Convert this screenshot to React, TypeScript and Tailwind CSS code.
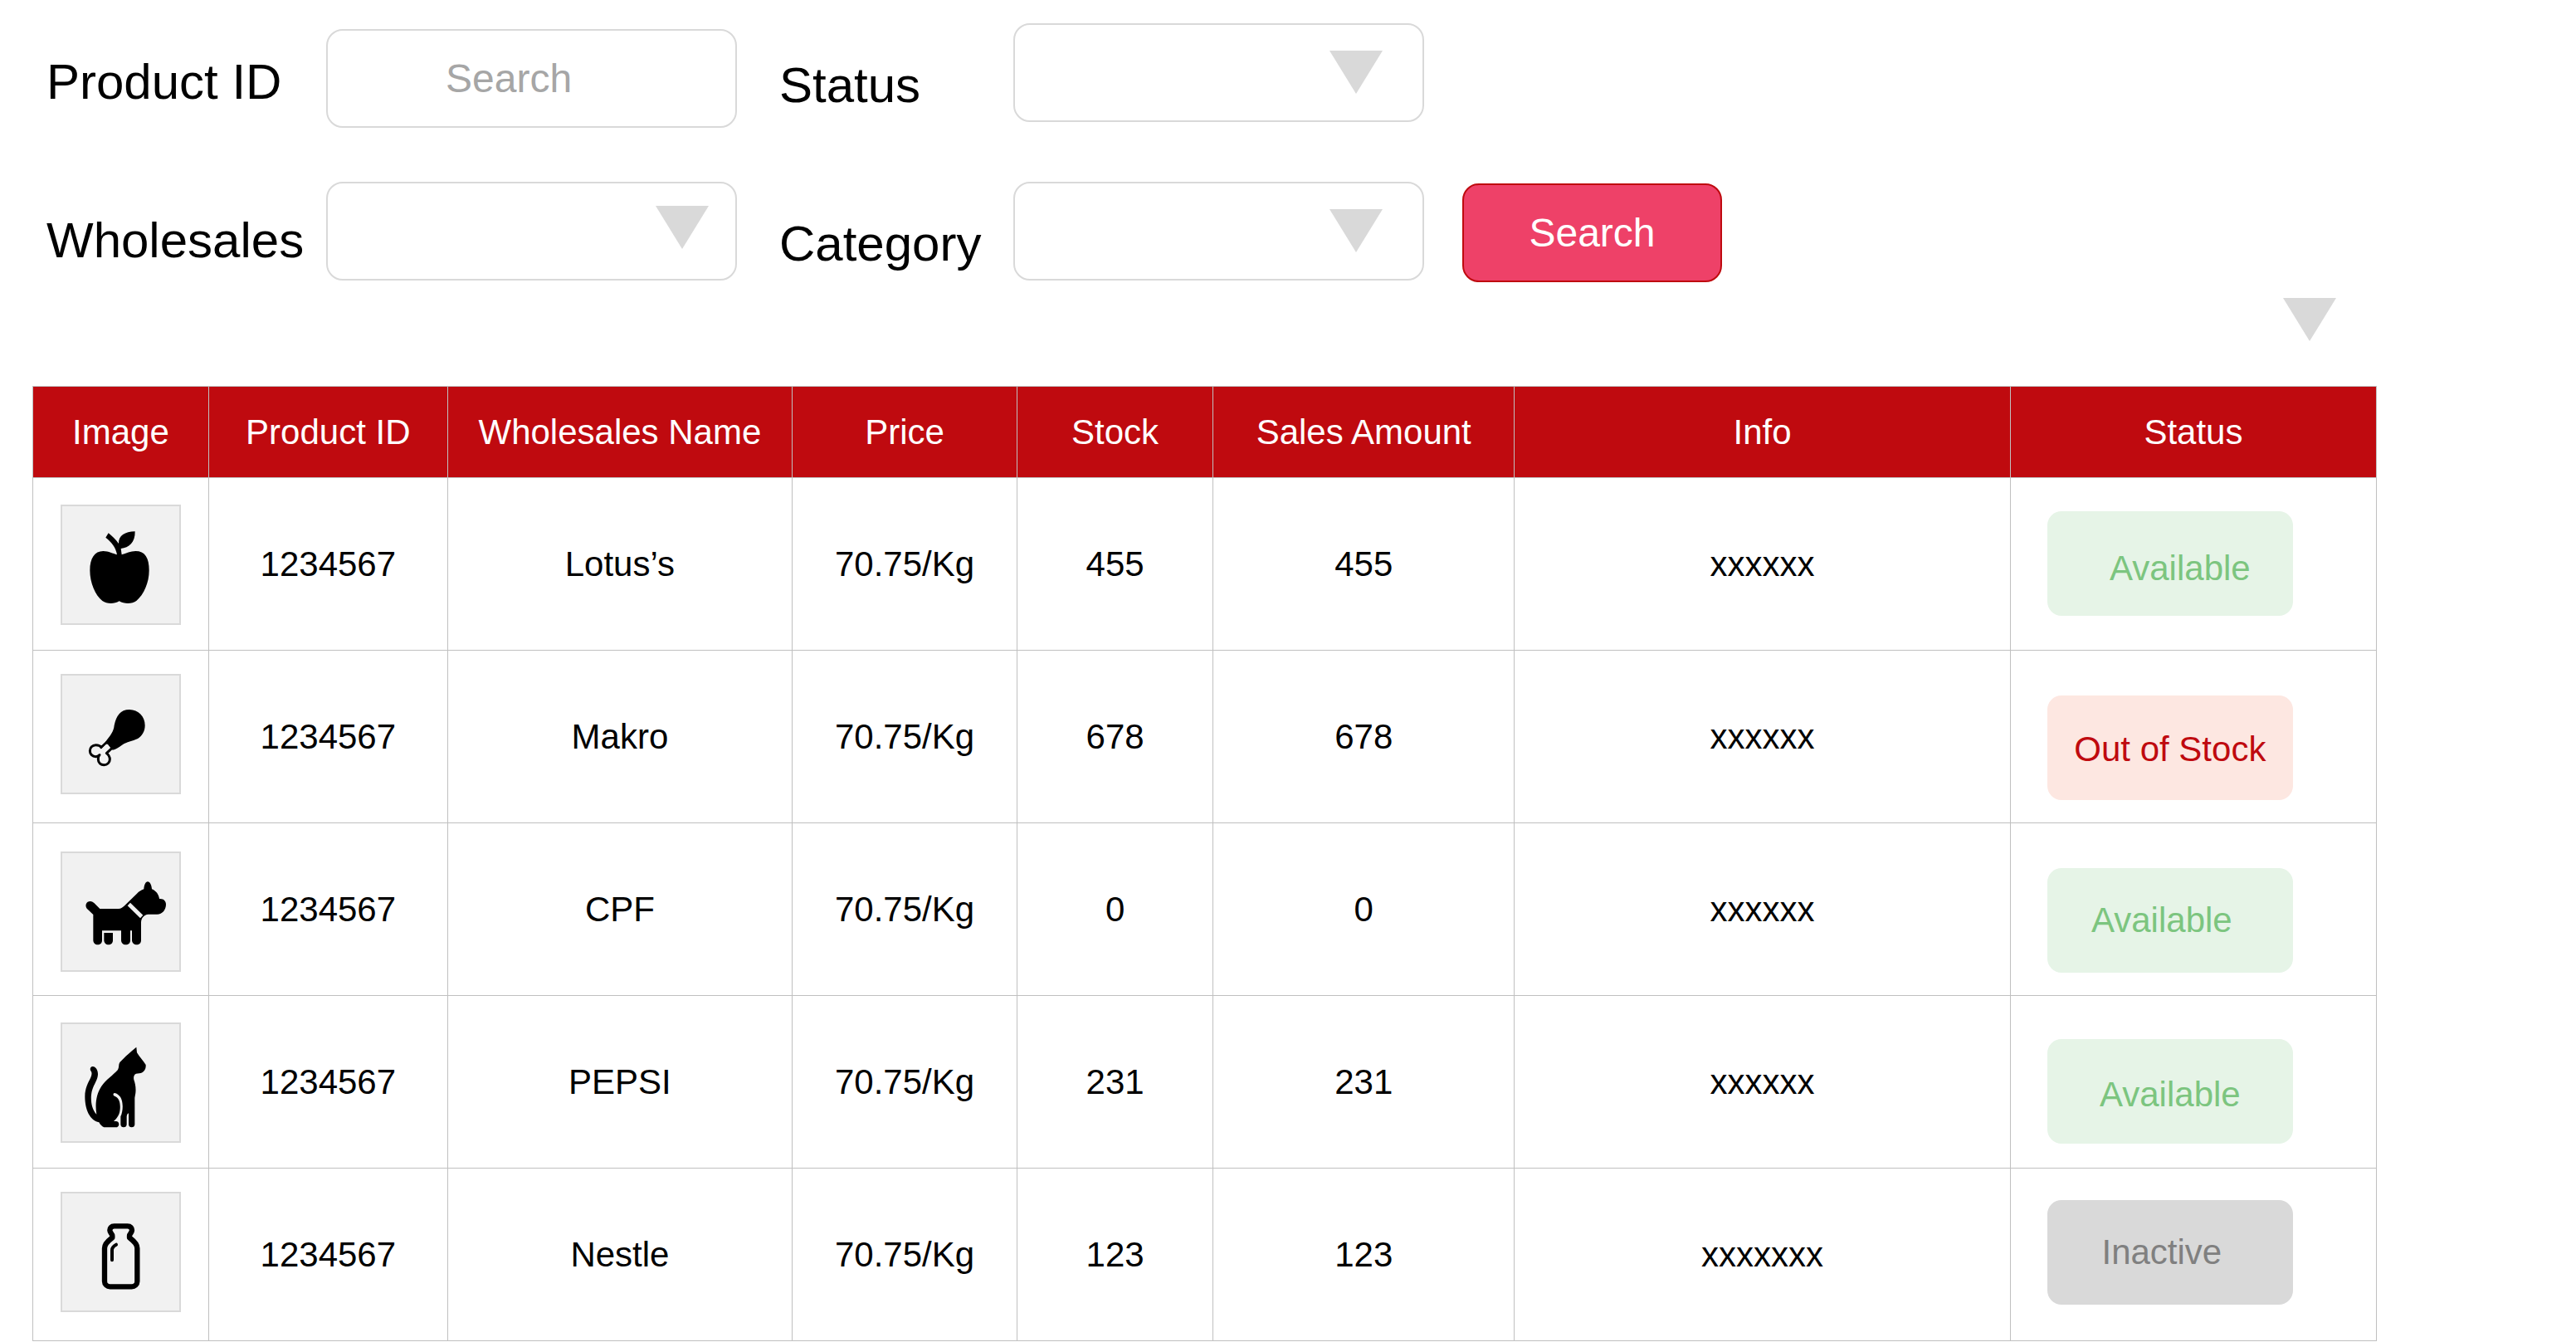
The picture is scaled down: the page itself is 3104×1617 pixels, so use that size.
import type { ReactNode } from "react";

const tileClass = "mx-auto block size-[145px] border-2 border-[#d9d9d9] bg-[#f1f1f1]";

function AppleIcon() {
  return (
    <svg role="img" aria-label="Apple" viewBox="135 90 423 423" className={tileClass}>
      <path d="M333 265C318 261 303 252 283 252C252 252 235 278 235 322C235 366 254 412 280 432C296 443 322 444 341 433C360 444 388 443 403 432C430 410 449 366 449 322C449 276 434 252 400 252C382 252 366 260 350 265L347 243C376 240 399 222 398 181C362 182 338 196 339 225C328 210 315 197 302 187L292 203C312 219 329 238 333 265Z" />
    </svg>
  );
}

function DrumstickIcon() {
  return (
    <svg role="img" aria-label="Chicken drumstick" viewBox="132 72 423 423" className={tileClass}>
      <path d="M288 312C305 290 318 275 320 252C327 218 342 195 375 195C407 195 431 220 431 252C431 274 420 291 405 300C385 309 366 311 348 323C337 331 325 339 314 341Z" />
      <path
        d="M293 313L273 332C268 323 260 323 253 323C241 323 232 333 232 344C232 356 241 365 253 365C258 365 263 363 267 359C261 363 262 371 262 375C262 387 271 395 283 395C295 395 304 386 304 375C304 366 300 359 292 353L313 333"
        fill="none"
        stroke="#000"
        strokeWidth="9"
        strokeLinejoin="round"
      />
      <path d="M273 338L290 321L297 321L303 331L289 348L278 354L266 353Z" fill="#f1f1f1" />
    </svg>
  );
}

function DogIcon() {
  return (
    <svg role="img" aria-label="Dog" viewBox="135 87 423 423" className={tileClass}>
      <path d="M247 309L224 287C216 276 222 261 236 261C243 261 247 264 251 268L271 288H338C348 288 354 283 361 276L405 233C413 225 420 221 430 217C431 203 436 190 444 190C452 190 458 203 459 217C474 223 484 236 486 252C500 250 510 259 510 272C510 291 497 308 478 308H446C430 309 420 322 420 338V402C420 412 413 418 404 418C395 418 387 411 387 402V367H381V402C381 412 374 418 365 418C355 418 348 411 348 402V367H279V402C279 412 272 418 263 418C254 418 247 411 247 402Z" />
      <path d="M286 375H318V402C318 412 311 418 302 418C293 418 286 411 286 402Z" />
      <path d="M381 266L427 311L417 322L371 277Z" fill="#f1f1f1" />
    </svg>
  );
}

function CatIcon() {
  return (
    <svg role="img" aria-label="Cat" viewBox="132 69 423 423" className={tileClass}>
      <path d="M400 152L402 172C411 187 425 202 434 216C435 231 428 242 416 246L399 248C391 251 389 260 391 270C396 283 399 300 397 318L394 335V432C394 438 389 442 383 442C377 442 372 438 372 432V391C367 393 365 399 365 405V432C365 438 360 442 354 442C348 442 343 438 343 432V403C354 379 353 340 337 327C332 321 325 318 321 318C315 319 315 327 321 329C337 334 343 352 341 376C340 395 331 409 318 420H326C333 420 337 425 337 431C337 437 332 442 326 442H283C275 438 269 432 265 424C232 418 214 378 214 331C214 300 226 281 235 262C239 252 240 244 236 239C230 232 234 222 242 222C253 222 261 235 261 250C261 269 247 286 240 308C233 332 235 375 256 395C250 357 255 321 274 293C290 270 315 254 333 234C338 226 335 214 340 207C356 190 382 166 400 152Z" />
    </svg>
  );
}

function BottleIcon() {
  return (
    <svg role="img" aria-label="Bottle" viewBox="132 87 423 423" className={tileClass}>
      <g fill="none" stroke="#000" strokeLinecap="round" strokeLinejoin="round">
        <path
          d="M320 205H368C379 205 384 212 384 220C384 230 375 233 375 240V247C385 255 403 266 403 285V405C403 416 394 424 383 424H305C294 424 285 416 285 405V285C285 266 303 255 313 247V240C313 233 304 230 304 220C304 212 309 205 320 205Z"
          strokeWidth="19"
        />
        <path d="M327 272C318 277 312 282 312 291V328" strokeWidth="12" />
      </g>
    </svg>
  );
}

function Triangle() {
  return (
    <svg aria-hidden="true" viewBox="0 0 64 52" className="block h-[52px] w-16 fill-[#d9d9d9]">
      <path d="M0 0H64L32 52Z" />
    </svg>
  );
}

function SelectBox({ id, options, arrow }: { id: string; options: string[]; arrow: string }) {
  return (
    <div className="relative">
      <select
        id={id}
        defaultValue=""
        className="block h-[119px] w-full appearance-none rounded-[20px] border-2 border-[#d9d9d9] bg-white px-8 text-[48px]"
      >
        <option value=""></option>
        {options.map((o) => (
          <option key={o}>{o}</option>
        ))}
      </select>
      <span className={`pointer-events-none absolute ${arrow}`}>
        <Triangle />
      </span>
    </div>
  );
}

type Row = {
  icon: ReactNode;
  iconCell: string;
  name: string;
  amount: string;
  info: string;
  status: string;
  badgeCell: string;
  badge: string;
};

const green = "bg-[#e6f4e7] text-[#7cc57f]";

const rows: Row[] = [
  { icon: <AppleIcon />, iconCell: "pt-8", name: "Lotus’s", amount: "455", info: "xxxxxx", status: "Available", badgeCell: "pt-10", badge: `${green} pl-6 pt-3` },
  { icon: <DrumstickIcon />, iconCell: "pt-7", name: "Makro", amount: "678", info: "xxxxxx", status: "Out of Stock", badgeCell: "pt-[54px]", badge: "bg-[#fde7e1] text-[#bf0a0f] pt-1" },
  { icon: <DogIcon />, iconCell: "pt-[34px]", name: "CPF", amount: "0", info: "xxxxxx", status: "Available", badgeCell: "pt-[54px]", badge: `${green} pr-5` },
  { icon: <CatIcon />, iconCell: "pt-8", name: "PEPSI", amount: "231", info: "xxxxxx", status: "Available", badgeCell: "pt-[52px]", badge: `${green} pt-2` },
  { icon: <BottleIcon />, iconCell: "pt-7", name: "Nestle", amount: "123", info: "xxxxxxx", status: "Inactive", badgeCell: "pt-[38px]", badge: "bg-[#d9d9d9] text-[#808080] pr-5" },
];

const columns = [
  { title: "Image", width: "w-[7.5%]" },
  { title: "Product ID", width: "w-[10.2%]" },
  { title: "Wholesales Name", width: "w-[14.7%]" },
  { title: "Price", width: "w-[9.6%]" },
  { title: "Stock", width: "w-[8.36%]" },
  { title: "Sales Amount", width: "w-[12.86%]" },
  { title: "Info", width: "w-[21.16%]" },
  { title: "Status", width: "w-[15.62%]" },
];

export default function App() {
  const label = "block whitespace-nowrap text-[60px] leading-[72px]";
  const cell = "border border-[#c0c0c0] p-0 text-center font-normal";
  return (
    <main className="bg-white font-['Liberation_Sans',Arial,sans-serif] text-black">
      <form
        onSubmit={(e) => e.preventDefault()}
        className="grid grid-cols-[337fr_546fr_282fr_541fr_313fr_1029fr] items-start gap-y-[65px] pl-[56px] pt-7"
      >
        <label htmlFor="product-id" className={`${label} mt-[35px]`}>Product ID</label>
        <div className="pr-[51px] pt-[7px]">
          <input
            id="product-id"
            type="text"
            placeholder="Search"
            className="block h-[119px] w-full rounded-[20px] border-2 border-[#d9d9d9] bg-white pl-[142px] text-[48px] placeholder:text-[#a6a6a6] placeholder:opacity-100"
          />
        </div>
        <label htmlFor="status" className={`${label} mt-[39px]`}>Status</label>
        <div className="col-span-3 grid grid-cols-subgrid">
          <div className="pr-[46px]">
            <SelectBox id="status" options={["Available", "Out of Stock", "Inactive"]} arrow="right-[50px] top-[33px]" />
          </div>
        </div>

        <label htmlFor="wholesales" className={`${label} mt-[35px]`}>Wholesales</label>
        <div className="pr-[51px]">
          <SelectBox id="wholesales" options={["Lotus’s", "Makro", "CPF", "PEPSI", "Nestle"]} arrow="right-[34px] top-[29px]" />
        </div>
        <label htmlFor="category" className={`${label} mt-[39px]`}>Category</label>
        <div className="pr-[46px]">
          <SelectBox id="category" options={["Fruit", "Meat", "Pets", "Dairy"]} arrow="right-[50px] top-[33px]" />
        </div>
        <button
          type="submit"
          className="mt-[2px] h-[119px] w-full rounded-[20px] border-2 border-[#bf0a0f] bg-[#ee4168] text-[48px] text-white"
        >
          Search
        </button>
      </form>

      <div className="flex justify-end pb-[54px] pr-[289px] pt-[19px]">
        <button type="button" aria-label="Expand table options">
          <Triangle />
        </button>
      </div>

      <div className="pl-[39px] pr-[240px]">
        <table className="w-full table-fixed border-collapse text-[42px] leading-[50px]">
          <thead>
            <tr className="h-[110px] bg-[#bf0a0f] text-white">
              {columns.map((c) => (
                <th key={c.title} scope="col" className={`${cell} ${c.width}`}>{c.title}</th>
              ))}
            </tr>
          </thead>
          <tbody>
            {rows.map((r) => (
              <tr key={r.name} className="h-[208px]">
                <td className="border border-[#c0c0c0] p-0 align-top">
                  <div className={r.iconCell}>{r.icon}</div>
                </td>
                <td className={cell}>1234567</td>
                <td className={cell}>{r.name}</td>
                <td className={cell}>70.75/Kg</td>
                <td className={cell}>{r.amount}</td>
                <td className={cell}>{r.amount}</td>
                <td className={cell}>{r.info}</td>
                <td className="border border-[#c0c0c0] p-0 align-top">
                  <div className={`${r.badgeCell} pl-11`}>
                    <span className={`flex h-[126px] w-[296px] items-center justify-center rounded-[17px] ${r.badge}`}>
                      {r.status}
                    </span>
                  </div>
                </td>
              </tr>
            ))}
          </tbody>
        </table>
      </div>
    </main>
  );
}
